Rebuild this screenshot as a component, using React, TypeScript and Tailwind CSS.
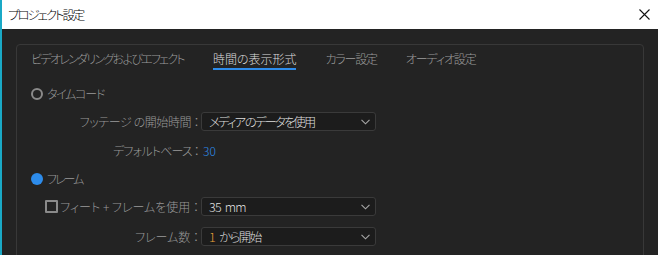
import React from "react";

const font = "font-['Noto_Sans_CJK_JP','Noto_Sans',sans-serif] [font-feature-settings:'palt']";

function Chevron() {
  return (
    <svg width="9" height="6" viewBox="0 0 9 6" className="shrink-0">
      <path d="M0.5 0.8 L4.5 4.8 L8.5 0.8" fill="none" stroke="#a8a8a8" strokeWidth="1.1" />
    </svg>
  );
}

function Dropdown({ children, tracking }: { children: React.ReactNode; tracking: string }) {
  return (
    <div className="ml-[2px] flex h-[19px] w-[175px] items-center justify-between rounded-[3px] border border-[#3a3a3a] bg-[#1c1c1c] pl-[7px] pr-[5px]">
      <span className={`flex items-center whitespace-pre text-[12.5px] leading-[17px] text-[#dedede] ${tracking}`}>{children}</span>
      <Chevron />
    </div>
  );
}

export default function App() {
  return (
    <div className={`flex h-[255px] w-[658px] overflow-hidden border-l-2 border-[#1aa9c6] font-light ${font}`}>
      <div className="flex flex-1 flex-col">
        <div className="flex h-[29px] shrink-0 items-center justify-between bg-white pl-[6px] pr-[8px]">
          <span className="text-[12.5px] leading-[17px] tracking-[-2.1px] text-black">プロジェクト設定</span>
          <svg width="11" height="11" viewBox="0 0 11 11">
            <path d="M0.5 0.5 L10.5 10.5 M10.5 0.5 L0.5 10.5" stroke="#111" strokeWidth="1.1" />
          </svg>
        </div>
        <div className="flex-1 bg-[#232323] pl-[14px] pr-[14px] pt-[15px]">
          <div className="h-[260px] rounded-[4px] border border-[#383838] px-[14px]">
            <div className="flex gap-[29px] pt-[6px] text-[12px] leading-[16px] text-[#9c9c9c]">
              <div className="pb-[1px] tracking-[-1.7px]">ビデオレンダリングおよびエフェクト</div>
              <div className="border-b-2 border-[#2d8ceb] pb-[1px] text-[#dcdcdc]">時間の表示形式</div>
              <div className="pb-[1px] tracking-[-1.2px]">カラー設定</div>
              <div className="pb-[1px] tracking-[-1.1px]">オーディオ設定</div>
            </div>

            <div className="mt-[16px] flex h-[16px] items-center text-[12px] text-[#9a9a9a]">
              <div className="h-[12px] w-[12px] rounded-full border-2 border-[#8a8a8a]" />
              <span className="ml-[4px] tracking-[-1.3px]">タイムコード</span>
            </div>

            <div className="mt-[10px] flex h-[19px] items-center text-[12px] text-[#9a9a9a]">
              <div className="w-[168px] text-right tracking-[-0.4px]">フッテージ の開始時間 ：</div>
              <Dropdown tracking="tracking-[-2px]">メディア のデータを使用</Dropdown>
            </div>

            <div className="mt-[10px] flex h-[19px] items-center text-[12px] text-[#9a9a9a]">
              <div className="w-[168px] text-right tracking-[-0.8px]">デフォルトベース ：</div>
              <span className="ml-[4px] text-[12px] text-[#2d8ceb]">30</span>
            </div>

            <div className="mt-[11px] flex h-[16px] items-center text-[12px] text-[#9a9a9a]">
              <div className="h-[12px] w-[12px] rounded-full bg-[#2d8ceb]" />
              <span className="ml-[4px] tracking-[-2px]">フレーム</span>
            </div>

            <div className="mt-[10px] flex h-[19px] items-center text-[12px] text-[#9a9a9a]">
              <div className="flex w-[168px] items-center pl-[14px]">
                <div className="h-[13px] w-[13px] rounded-[1px] border-2 border-[#8a8a8a]" />
                <span className="flex-1 whitespace-pre text-right">フィート + フレームを使用 ：</span>
              </div>
              <Dropdown tracking="tracking-[-0.8px]">
                <span>35</span>
                <span className="ml-[4px]">mm</span>
              </Dropdown>
            </div>

            <div className="mt-[11px] flex h-[19px] items-center text-[12px] text-[#9a9a9a]">
              <div className="w-[168px] text-right">フレーム数 ：</div>
              <Dropdown tracking="tracking-[-1.6px]">
                <span className="text-[#e8a23a]">1</span>
                <span className="ml-[5px]">から開始</span>
              </Dropdown>
            </div>
          </div>
        </div>
      </div>
    </div>
  );
}
